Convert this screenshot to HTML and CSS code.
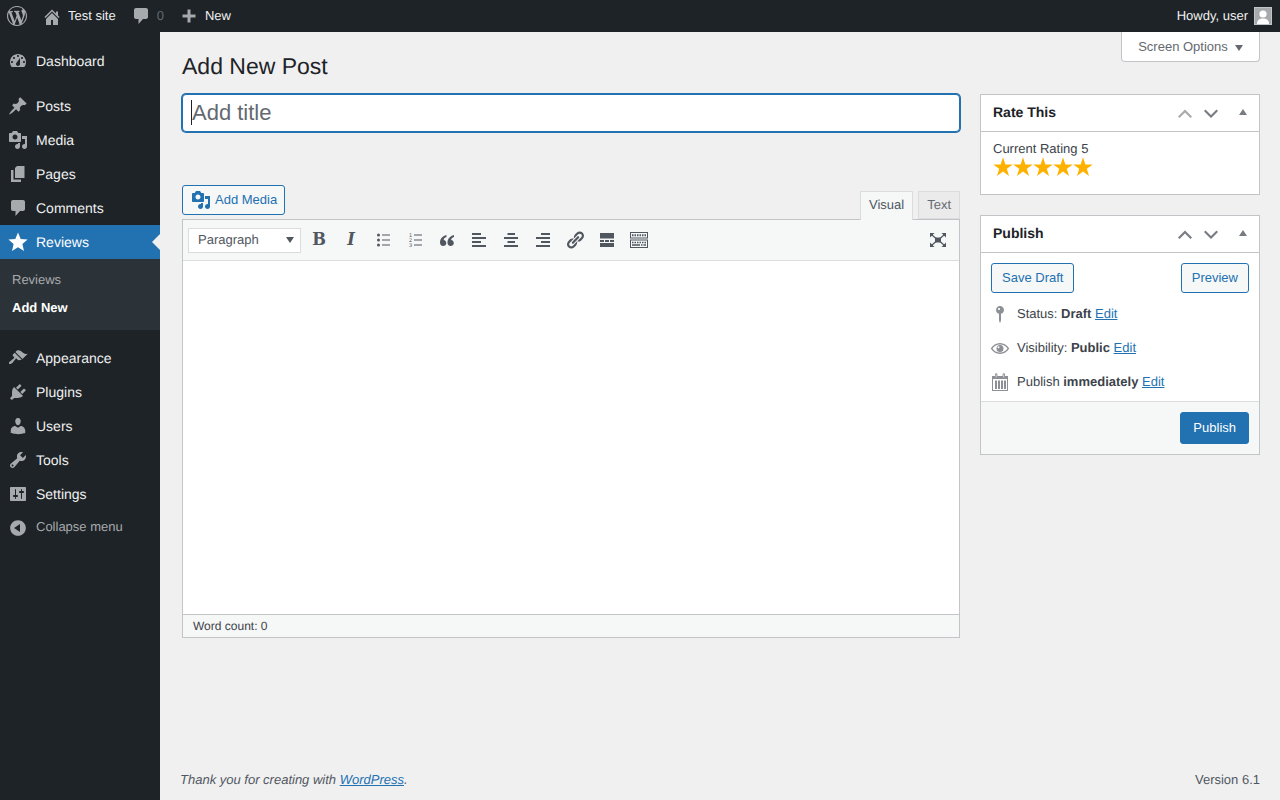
FILE: index.html
```html
<!DOCTYPE html>
<html lang="en">
<head>
    <meta charset="UTF-8">
    <meta name="viewport" content="width=device-width, initial-scale=1.0">
    <title>Add New Post</title>
    <link rel="stylesheet" href="styles.css">
</head>
<body>
    <svg class="sprite" aria-hidden="true">
        <symbol id="i-media" viewBox="0 0 20 20"><path d="M13 11V4c0-.55-.45-1-1-1h-1.67L9 1H5L3.67 3H2c-.55 0-1 .45-1 1v7c0 .55.45 1 1 1h10c.55 0 1-.45 1-1zM7 4.500c1.380 0 2.500 1.120 2.500 2.500S8.380 9.500 7 9.500 4.500 8.380 4.500 7 5.620 4.500 7 4.500zM14 6h5v10.500c0 1.380-1.120 2.500-2.500 2.500S14 17.880 14 16.500s1.120-2.500 2.500-2.500c.17 0 .34.02.5.05V9h-3V6zm-4 8.050V13h2v3.500c0 1.380-1.120 2.500-2.500 2.500S7 17.880 7 16.500 8.120 14 9.500 14c.17 0 .34.02.5.05z"/></symbol>
        <symbol id="i-comment" viewBox="0 0 20 20"><path d="M5 2h10c1.100 0 2 .9 2 2v7c0 1.100-.9 2-2 2h-3l-4.500 5v-5H5c-1.100 0-2-.9-2-2V4c0-1.100.9-2 2-2z"/></symbol>
        <symbol id="i-star" viewBox="0 0 20 20"><path d="M10 .5l2.700 6.400 6.900.6-5.200 4.600 1.600 6.800L10 15.300l-6 3.600 1.600-6.800L.4 7.500l6.900-.6z"/></symbol>
        <symbol id="i-rating" viewBox="0 0 20 20"><path d="M10 .3l2.350 7.100h7.450l-6 4.450 2.250 7.150L10 14.600 3.950 19l2.250-7.150-6-4.450h7.450z"/></symbol>
        <symbol id="i-up" viewBox="0 0 20 20"><path d="M3 13.500L10 6.500l7 7-1.500 1.500L10 9.500 4.500 15z"/></symbol>
        <symbol id="i-down" viewBox="0 0 20 20"><path d="M3 8L10 15l7-7-1.500-1.500L10 12 4.500 6.500z"/></symbol>
    </svg>

    <header class="adminbar">
        <div class="bar-left">
            <svg class="bar-logo" viewBox="0 0 20 20"><path d="M20 10c0-5.510-4.490-10-10-10C4.480 0 0 4.490 0 10c0 5.520 4.480 10 10 10 5.510 0 10-4.480 10-10zM7.780 15.370L4.370 6.220c.55-.02 1.170-.08 1.170-.08.5-.06.44-1.130-.06-1.110 0 0-1.450.11-2.370.11-.18 0-.37 0-.58-.01C4.120 2.690 6.870 1.110 10 1.110c2.330 0 4.450.87 6.050 2.340-.68-.11-1.650.39-1.650 1.580 0 .74.45 1.360.9 2.100.35.61.55 1.360.55 2.460 0 1.490-1.400 5-1.400 5l-3.030-8.370c.54-.02.82-.17.82-.17.5-.05.44-1.250-.06-1.220 0 0-1.440.12-2.380.12-.87 0-2.330-.12-2.330-.12-.5-.03-.56 1.200-.06 1.220l.92.08 1.260 3.410zM17.410 10c.24-.64.74-1.870.43-4.250.7 1.290 1.050 2.710 1.050 4.250 0 3.290-1.730 6.240-4.400 7.780.97-2.590 1.940-5.200 2.920-7.780zM6.100 18.090C3.120 16.650 1.110 13.530 1.110 10c0-1.300.23-2.480.72-3.590C3.250 10.300 4.670 14.200 6.100 18.090zm4.030-6.630l2.580 6.980c-.86.29-1.760.45-2.710.45-.79 0-1.570-.11-2.290-.33.81-2.380 1.620-4.740 2.420-7.100z"/></svg>
            <a class="bar-item bar-site">
                <svg class="bar-icon" viewBox="0 0 20 20"><path d="M16 8.500l1.530 1.530-1.060 1.060L10 4.620l-6.470 6.470-1.060-1.060L10 2.500l4 4v-2h2v4zm-6-2.460l6 5.990V18h-5v-5H9v5H4v-5.970z"/></svg>
                <span>Test site</span>
            </a>
            <a class="bar-item bar-comments">
                <svg class="bar-icon"><use href="#i-comment"/></svg>
                <span class="bar-count">0</span>
            </a>
            <a class="bar-item bar-new">
                <svg class="bar-icon" viewBox="0 0 20 20"><path d="M8.500 3.500h3v5h5v3h-5v5h-3v-5h-5v-3h5z"/></svg>
                <span>New</span>
            </a>
        </div>
        <div class="bar-right">
            <span>Howdy, user</span>
            <svg class="avatar" viewBox="0 0 18 18"><rect width="18" height="18" fill="#c3c4c7"/><rect x="1" y="1" width="16" height="16" fill="#a7aaad"/><circle cx="9" cy="7" r="3.600" fill="#fff"/><path d="M3 17c0-4 2.500-5.500 6-5.500s6 1.500 6 5.500z" fill="#fff"/></svg>
        </div>
    </header>

    <div class="layout">
        <nav class="sidemenu">
            <a class="menu-item">
                <svg viewBox="0 0 20 20"><path d="M3.760 16h12.480c1.100-1.370 1.760-3.110 1.760-5 0-4.420-3.580-8-8-8s-8 3.580-8 8c0 1.890.66 3.630 1.760 5zM10 4c.55 0 1 .45 1 1s-.45 1-1 1-1-.45-1-1 .45-1 1-1zM6 6c.55 0 1 .45 1 1s-.45 1-1 1-1-.45-1-1 .45-1 1-1zm8 0c.55 0 1 .45 1 1s-.45 1-1 1-1-.45-1-1 .45-1 1-1zm-5.370 5.550L12 7v6c0 1.100-.9 2-2 2s-2-.9-2-2c0-.57.24-1.080.63-1.450zM4 10c.55 0 1 .45 1 1s-.45 1-1 1-1-.45-1-1 .45-1 1-1zm12 0c.55 0 1 .45 1 1s-.45 1-1 1-1-.45-1-1 .45-1 1-1z" fill-rule="evenodd"/></svg>
                Dashboard
            </a>
            <div class="menu-sep"></div>
            <a class="menu-item">
                <svg viewBox="0 0 20 20"><path d="M10.440 3.020l1.820-1.820 6.360 6.350-1.830 1.820c-1.050-.68-2.480-.57-3.410.36l-.75.75c-.92.93-1.040 2.350-.35 3.410l-1.830 1.820-2.410-2.410-2.800 2.790c-.42.42-3.380 2.710-3.800 2.290s1.860-3.390 2.280-3.810l2.790-2.790L4.100 9.360l1.830-1.820c1.050.69 2.480.57 3.400-.36l.75-.75c.93-.92 1.050-2.350.36-3.410z"/></svg>
                Posts
            </a>
            <a class="menu-item"><svg><use href="#i-media"/></svg>Media</a>
            <a class="menu-item">
                <svg viewBox="0 0 20 20"><path d="M9 2h7.500v12H7V4zM3 6h2.500v9.500H13V18H3z"/></svg>
                Pages
            </a>
            <a class="menu-item"><svg><use href="#i-comment"/></svg>Comments</a>
            <a class="menu-item menu-current"><svg><use href="#i-star"/></svg>Reviews</a>
            <div class="submenu">
                <a class="submenu-item">Reviews</a>
                <a class="submenu-item submenu-current">Add New</a>
            </div>
            <div class="menu-sep"></div>
            <a class="menu-item">
                <svg viewBox="0 0 20 20"><path d="M14.480 11.060L7.410 3.990l1.500-1.500c.5-.56 2.300-.47 3.510.32 1.210.8 1.430 1.280 2.910 2.100 1.180.64 2.450 1.260 4.450.85zm-.71.71L6.700 4.700 4.930 6.470c-.39.39-.39 1.020 0 1.410l1.060 1.060c.39.39.39 1.030 0 1.420-.6.6-1.430 1.110-2.210 1.690-.35.26-.7.53-1.010.84C1.430 13.230.4 14.910 1.200 15.700c.79.8 2.470-.23 3.820-1.570.31-.31.58-.66.85-1.020.57-.78 1.080-1.610 1.690-2.210.39-.39 1.020-.39 1.410 0l1.060 1.060c.39.39 1.020.39 1.410 0z"/></svg>
                Appearance
            </a>
            <a class="menu-item">
                <svg viewBox="0 0 20 20"><path d="M13.110 4.360L9.870 7.600 8 5.730l3.240-3.240c.35-.34 1.050-.2 1.560.32.52.51.66 1.210.31 1.550zm-8 1.770l.91-1.120 9.010 9.010-1.190.84c-.71.71-2.630 1.160-3.820 1.160H6.140L4.900 17.260c-.59.59-1.540.59-2.120 0-.59-.58-.59-1.530 0-2.120l1.240-1.240v-3.880c0-1.130.4-3.190 1.090-3.890zm7.260 3.970l3.240-3.240c.34-.35 1.040-.21 1.550.31.52.51.66 1.210.31 1.550l-3.240 3.250z"/></svg>
                Plugins
            </a>
            <a class="menu-item">
                <svg viewBox="0 0 20 20"><path d="M10 9.250c-2.270 0-2.730-3.440-2.730-3.440C7 4.020 7.820 2 9.970 2c2.160 0 2.980 2.020 2.710 3.810 0 0-.41 3.440-2.680 3.440zm0 2.570L12.720 10c2.390 0 4.520 2.330 4.520 4.530v2.490s-3.650 1.130-7.240 1.130c-3.650 0-7.240-1.130-7.240-1.130v-2.490c0-2.250 1.940-4.480 4.470-4.480z"/></svg>
                Users
            </a>
            <a class="menu-item">
                <svg viewBox="0 0 20 20"><path d="M16.680 9.770c-1.340 1.340-3.300 1.670-4.950.99l-5.410 6.520c-.99.99-2.590.99-3.580 0s-.99-2.590 0-3.570l6.520-5.420c-.68-1.650-.35-3.610.99-4.950 1.280-1.280 3.120-1.620 4.720-1.060l-2.890 2.890 2.820 2.820 2.860-2.870c.53 1.580.18 3.390-1.080 4.650zM3.810 16.210c.4.39 1.040.39 1.430 0 .4-.4.4-1.040 0-1.430-.39-.4-1.030-.4-1.430 0-.39.39-.39 1.030 0 1.430z"/></svg>
                Tools
            </a>
            <a class="menu-item">
                <svg viewBox="0 0 20 20"><path d="M18 16V4c0-.55-.45-1-1-1H3c-.55 0-1 .45-1 1v12c0 .55.45 1 1 1h14c.55 0 1-.45 1-1zM8 11h1c.55 0 1 .45 1 1s-.45 1-1 1H8v1.500c0 .28-.22.5-.5.5s-.5-.22-.5-.5V13H6c-.55 0-1-.45-1-1s.45-1 1-1h1V5.500c0-.28.22-.5.5-.5s.5.22.5.5V11zm5-2h-1c-.55 0-1-.45-1-1s.45-1 1-1h1V5.500c0-.28.22-.5.5-.5s.5.22.5.5V7h1c.55 0 1 .45 1 1s-.45 1-1 1h-1v5.500c0 .28-.22.5-.5.5s-.5-.22-.5-.5V9z"/></svg>
                Settings
            </a>
            <a class="menu-item menu-collapse">
                <svg viewBox="0 0 20 20"><path d="M10 2.160c4.330 0 7.840 3.510 7.840 7.840s-3.510 7.840-7.840 7.840S2.160 14.330 2.160 10 5.710 2.160 10 2.160zm2 11.840V6l-6 4z"/></svg>
                Collapse menu
            </a>
        </nav>

        <main class="content">
            <button class="screen-options">Screen Options<i class="caret"></i></button>
            <div class="wrap">
                <h1>Add New Post</h1>
                <div class="columns">
                    <div class="post-column">
                        <div class="title-wrap">
                            <input class="title-input" type="text" placeholder="Add title">
                            <span class="title-caret"></span>
                        </div>

                        <div class="editor-tools">
                            <button class="btn btn-media"><svg><use href="#i-media"/></svg>Add Media</button>
                            <div class="editor-tabs">
                                <span class="tab tab-active">Visual</span>
                                <span class="tab">Text</span>
                            </div>
                        </div>

                        <div class="editor">
                            <div class="toolbar">
                                <div class="format-select">Paragraph<i class="caret"></i></div>
                                <span class="tool tool-b">B</span>
                                <span class="tool tool-i">I</span>
                                <span class="tool"><svg viewBox="0 0 20 20"><circle cx="5.500" cy="5" r="1.500"/><circle cx="5.500" cy="10" r="1.500"/><circle cx="5.500" cy="15" r="1.500"/><path d="M9 4.500h8v1H9zM9 9.500h8v1H9zM9 14.500h8v1H9z"/></svg></span>
                                <span class="tool"><svg viewBox="0 0 20 20"><text x="4" y="7" class="ol-num">1</text><text x="4" y="12" class="ol-num">2</text><text x="4" y="17" class="ol-num">3</text><path d="M9 4.500h8v1H9zM9 9.500h8v1H9zM9 14.500h8v1H9z"/></svg></span>
                                <span class="tool"><svg viewBox="0 0 20 20"><path d="M9.500 5C5.500 6 3 9 3 12.500 3 14.800 4.300 16 6 16c1.900 0 3.300-1.300 3.300-3.100 0-1.600-1.100-2.800-2.700-3C6.800 8.500 8 7.500 9.500 7zM17 5c-4 1-6.500 4-6.500 7.500 0 2.300 1.300 3.500 3 3.500 1.900 0 3.300-1.300 3.300-3.100 0-1.600-1.100-2.800-2.700-3 .2-1.400 1.400-2.400 2.900-2.900z"/></svg></span>
                                <span class="tool"><svg viewBox="0 0 20 20"><path d="M3 3h9v2H3zM3 7h14v2H3zM3 11h9v2H3zM3 15h14v2H3z"/></svg></span>
                                <span class="tool"><svg viewBox="0 0 20 20"><path d="M6.500 3h7.500v2H6.500zM3 7h14v2H3zM6.500 11h7.500v2H6.500zM3 15h14v2H3z"/></svg></span>
                                <span class="tool"><svg viewBox="0 0 20 20"><path d="M8 3h9v2H8zM3 7h14v2H3zM8 11h9v2H8zM3 15h14v2H3z"/></svg></span>
                                <span class="tool"><svg viewBox="0 0 20 20"><path d="M17.740 2.760c1.680 1.690 1.680 4.410 0 6.100l-1.530 1.520c-1.120 1.120-2.700 1.470-4.140 1.090l2.620-2.610.76-.77.76-.76c.84-.84.84-2.200 0-3.040-.84-.85-2.200-.85-3.040 0l-.77.76-3.380 3.380c-.37-1.440-.02-3.020 1.100-4.140l1.520-1.530c1.690-1.680 4.420-1.680 6.100 0zM8.590 13.430l5.340-5.340c.42-.42.42-1.100 0-1.520-.44-.43-1.130-.39-1.530 0l-5.330 5.340c-.42.42-.42 1.100 0 1.520.44.43 1.130.39 1.520 0zm-.76 2.290l4.140-4.150c.38 1.440.03 3.020-1.090 4.140l-1.520 1.530c-1.690 1.680-4.410 1.680-6.100 0-1.680-1.680-1.680-4.420 0-6.100l1.530-1.520c1.120-1.120 2.700-1.470 4.140-1.100l-4.140 4.150c-.85.84-.85 2.200 0 3.050.84.84 2.200.84 3.040 0z"/></svg></span>
                                <span class="tool"><svg viewBox="0 0 20 20"><path d="M3 3h14v5.500H3zM3 10h4v2H3zM8 10h4v2H8zM13 10h4v2h-4zM3 13h14v4H3z"/></svg></span>
                                <span class="tool"><svg class="tool-wide" viewBox="0 0 18 16"><path fill-rule="evenodd" d="M0 0h18v6.500H0zM1 1v4.500h16V1zM0 7.500h18V16H0zM1 8.500V15h16V8.500z"/><path d="M2 2.300h1.500v2H2zM4.500 2.300H6v2H4.500zM7 2.300h1.500v2H7zM9.500 2.300H11v2H9.500zM12 2.300h1.500v2H12zM14.500 2.300H16v2h-1.500zM2 9.800h1.500v1.500H2zM4.500 9.800H6v1.500H4.500zM7 9.800h1.500v1.500H7zM9.500 9.800H11v1.500H9.500zM12 9.800h1.500v1.500H12zM14.500 9.800H16v1.500h-1.500zM2 12.300h8v1.500H2zM11 12.300h1.500v1.500H11zM13.500 12.300H16v1.500h-2.500z"/></svg></span>
                                <span class="tool tool-end"><svg viewBox="0 0 20 20"><path d="M7 7.500h6v5H7zM2 3h4.500L2 7.500zM18 3v4.500L13.500 3zM2 17v-4.500L6.500 17zM18 17h-4.500l4.500-4.500z"/><path class="tool-line" d="M3.500 4.500L8 8.500M16.500 4.500L12 8.500M3.500 15.500L8 11.500M16.500 15.500L12 11.500"/></svg></span>
                            </div>
                            <div class="editor-body"></div>
                            <div class="editor-status">Word count: 0</div>
                        </div>
                    </div>

                    <aside class="side-column">
                        <section class="postbox">
                            <div class="postbox-head">
                                <h2>Rate This</h2>
                                <svg class="head-icon head-disabled"><use href="#i-up"/></svg>
                                <svg class="head-icon"><use href="#i-down"/></svg>
                                <i class="head-toggle"></i>
                            </div>
                            <div class="rate-body">
                                <div>Current Rating 5</div>
                                <div class="stars">
                                    <svg><use href="#i-rating"/></svg>
                                    <svg><use href="#i-rating"/></svg>
                                    <svg><use href="#i-rating"/></svg>
                                    <svg><use href="#i-rating"/></svg>
                                    <svg><use href="#i-rating"/></svg>
                                </div>
                            </div>
                        </section>

                        <section class="postbox">
                            <div class="postbox-head">
                                <h2>Publish</h2>
                                <svg class="head-icon"><use href="#i-up"/></svg>
                                <svg class="head-icon"><use href="#i-down"/></svg>
                                <i class="head-toggle"></i>
                            </div>
                            <div class="publish-actions">
                                <button class="btn">Save Draft</button>
                                <button class="btn">Preview</button>
                            </div>
                            <div class="publish-row">
                                <svg viewBox="0 0 20 20"><path d="M14 6c0 1.860-1.280 3.410-3 3.860V16c0 1-1 3-1 3s-1-2-1-3V9.860c-1.720-.45-3-2-3-3.860 0-2.210 1.790-4 4-4s4 1.790 4 4zM8 5c0 .55.45 1 1 1s1-.45 1-1-.45-1-1-1-1 .45-1 1z" fill-rule="evenodd"/></svg>
                                <span>Status: <b>Draft</b> <a>Edit</a></span>
                            </div>
                            <div class="publish-row">
                                <svg viewBox="0 0 20 20"><path fill-rule="evenodd" d="M10 5c4 0 7.200 2.200 9.200 5.500-2 3.300-5.200 5.500-9.200 5.500S2.800 13.800.8 10.500C2.800 7.200 6 5 10 5zM10 6.500c-3.200 0-5.800 1.600-7.500 4 1.700 2.400 4.300 4 7.500 4s5.800-1.600 7.500-4c-1.700-2.400-4.300-4-7.500-4z"/><path fill-rule="evenodd" d="M10 7a3.500 3.500 0 1 1 0 7 3.500 3.500 0 0 1 0-7zM8.500 8.300a1 1 0 1 0 0 2 1 1 0 0 0 0-2z"/></svg>
                                <span>Visibility: <b>Public</b> <a>Edit</a></span>
                            </div>
                            <div class="publish-row">
                                <svg viewBox="0 0 20 20"><path fill-rule="evenodd" d="M2 4h3V2.500a1.200 1.200 0 0 1 2.400 0V4h5.200V2.500a1.200 1.200 0 0 1 2.400 0V4h3v15H2zM3 7v11h14V7zM5.800 2.200v3.300h.6V2.200zM13.500 2.200v3.300h.6V2.200z"/><path d="M5 8.500h2V17H5zM8 8.500h2V17H8zM11 8.500h2V17h-2zM14 8.500h2V17h-2z"/></svg>
                                <span>Publish <b>immediately</b> <a>Edit</a></span>
                            </div>
                            <div class="publish-major">
                                <button class="btn btn-primary">Publish</button>
                            </div>
                        </section>
                    </aside>
                </div>
            </div>

            <footer class="page-footer">
                <em>Thank you for creating with <a>WordPress</a>.</em>
                <span>Version 6.1</span>
            </footer>
        </main>
    </div>
</body>
</html>
```

FILE: styles.css
```css
* {
    margin: 0;
    padding: 0;
    box-sizing: border-box;
}

body {
    font-family: "Liberation Sans", Arial, sans-serif;
    font-size: 13px;
    line-height: 1.4;
    color: #3c434a;
    background: #f0f0f1;
    min-height: 100vh;
    overflow: hidden;
    text-rendering: geometricPrecision;
}

a {
    color: #2271b1;
}

.sprite {
    display: none;
}

.caret {
    display: inline-block;
    width: 0;
    height: 0;
    border-left: 4.500px solid transparent;
    border-right: 4.500px solid transparent;
    border-top: 6px solid #50575e;
}

/* admin bar */
.adminbar {
    height: 32px;
    background: #1d2327;
    color: #f0f0f1;
    display: flex;
    justify-content: space-between;
    align-items: center;
    padding: 0 8px 0 7px;
}

.bar-left,
.bar-right,
.bar-item {
    display: flex;
    align-items: center;
}

.bar-logo {
    width: 20px;
    height: 20px;
    fill: #a7aaad;
}

.bar-icon {
    width: 20px;
    height: 20px;
    fill: #a7aaad;
    margin-right: 6px;
}

.bar-site {
    margin-left: 15px;
    color: #f0f0f1;
}

.bar-site .bar-icon {
    margin-top: 2px;
}

.bar-comments {
    margin-left: 15px;
}

.bar-count {
    color: #646970;
}

.bar-new {
    margin-left: 15px;
    color: #f0f0f1;
}

.bar-new .bar-icon {
    margin-right: 6px;
}

.avatar {
    width: 18px;
    height: 18px;
    margin-left: 6px;
}

/* side menu */
.layout {
    display: flex;
    height: 768px;
}

.sidemenu {
    width: 160px;
    flex: none;
    background: #1d2327;
    padding-top: 12px;
    font-size: 14px;
}

.menu-item {
    display: flex;
    align-items: center;
    height: 34px;
    padding: 2px 0 0 8px;
    color: #f0f0f1;
    position: relative;
}

.menu-item svg {
    width: 20px;
    height: 20px;
    fill: #a7aaad;
    margin: 0 8px 2px 0;
}

.menu-sep {
    height: 11px;
}

.menu-current {
    background: #2271b1;
    color: #fff;
}

.menu-current svg {
    fill: #fff;
}

.menu-current::after {
    content: "";
    position: absolute;
    right: 0;
    top: 9px;
    border: 8px solid transparent;
    border-right-color: #f0f0f1;
}

.submenu {
    background: #2c3338;
    padding: 7px 0;
    height: 71px;
    font-size: 13px;
}

.submenu-item {
    display: block;
    height: 28px;
    line-height: 28px;
    padding-left: 12px;
    color: #a7aaad;
}

.submenu-current {
    color: #fff;
    font-weight: bold;
}

.menu-collapse {
    font-size: 13px;
    color: #a7aaad;
    height: 32px;
    padding-top: 0;
}

.menu-collapse svg {
    margin: 2px 8px 0 0;
}

/* main area */
.content {
    flex: 1;
    padding: 0 20px;
    display: flex;
    flex-direction: column;
    position: relative;
}

.screen-options {
    position: absolute;
    top: 0;
    right: 20px;
    width: 139px;
    height: 30px;
    padding-top: 2px;
    background: #fff;
    border: 1px solid #c3c4c7;
    border-top: none;
    border-radius: 0 0 4px 4px;
    font: inherit;
    color: #646970;
    display: flex;
    align-items: center;
    justify-content: center;
    gap: 7px;
}

.screen-options .caret {
    border-top-color: #646970;
}

.wrap {
    margin: 10px 0 0 2px;
}

h1 {
    font-size: 23px;
    font-weight: 400;
    line-height: 30px;
    padding: 9px 0 4px;
    color: #1d2327;
    height: 52px;
}

.columns {
    display: grid;
    grid-template-columns: 778px 280px;
    gap: 20px;
}

.title-wrap {
    position: relative;
}

.title-input {
    display: block;
    width: 100%;
    height: 38px;
    padding: 3px 9px;
    font: 22px "Liberation Sans", Arial, sans-serif;
    border: 1px solid #2271b1;
    box-shadow: 0 0 0 1px #2271b1;
    border-radius: 4px;
    background: #fff;
    outline: none;
}

.title-input::placeholder {
    color: #646970;
    opacity: 1;
}

.title-caret {
    position: absolute;
    left: 9px;
    top: 6px;
    width: 1px;
    height: 25px;
    background: #1d2327;
}

.editor-tools {
    display: flex;
    justify-content: space-between;
    align-items: flex-end;
    margin-top: 53px;
    height: 34px;
    padding-bottom: 4px;
}

.btn {
    height: 30px;
    padding: 0 10px;
    font: inherit;
    color: #2271b1;
    background: #f6f7f7;
    border: 1px solid #2271b1;
    border-radius: 3px;
}

.btn-media {
    display: flex;
    align-items: center;
    gap: 4px;
    padding: 0 7px 0 8px;
    align-self: flex-start;
}

.btn-media svg {
    width: 20px;
    height: 20px;
    fill: #2271b1;
}

.editor-tabs {
    display: flex;
    gap: 5px;
    align-items: flex-start;
    height: 29px;
    margin-bottom: -5px;
    position: relative;
    z-index: 1;
}

.tab {
    height: 28px;
    line-height: 26px;
    padding: 0 8px;
    background: #ebebeb;
    border: 1px solid #dcdcde;
    color: #646970;
}

.tab-active {
    height: 29px;
    background: #f6f7f7;
    border-color: #dcdcde;
    border-bottom: none;
    color: #50575e;
}

.editor {
    border: 1px solid #c3c4c7;
    background: #fff;
}

.toolbar {
    height: 41px;
    background: #f6f7f7;
    border-bottom: 1px solid #dcdcde;
    display: flex;
    align-items: center;
    padding: 0 5px;
    gap: 0;
}

.format-select {
    width: 113px;
    height: 25px;
    margin-right: 2px;
    padding: 0 6px 0 9px;
    background: #fff;
    border: 1px solid #dcdcde;
    color: #50575e;
    display: flex;
    align-items: center;
    justify-content: space-between;
}

.tool {
    width: 32px;
    height: 30px;
    display: flex;
    align-items: center;
    justify-content: center;
    color: #50575e;
}

.tool svg {
    width: 20px;
    height: 20px;
    fill: #50575e;
}

.tool svg.tool-wide {
    width: 18px;
    height: 16px;
}

.tool-b,
.tool-i {
    font-family: "DejaVu Serif Condensed", "DejaVu Serif", serif;
    font-size: 18px;
    font-weight: bold;
}

.tool-i {
    font-style: italic;
}

.ol-num {
    font-size: 5.500px;
    fill: #50575e;
}

.tool-line {
    fill: none;
    stroke: #50575e;
    stroke-width: 1.200;
}

.tool-end {
    margin-left: auto;
}

.editor-body {
    height: 353px;
}

.editor-status {
    height: 23px;
    line-height: 22px;
    padding-left: 10px;
    font-size: 12px;
    color: #3c434a;
    background: #f6f7f7;
    border-top: 1px solid #c3c4c7;
}

/* right column */
.postbox {
    background: #fff;
    border: 1px solid #c3c4c7;
    margin-bottom: 20px;
}

.postbox-head {
    height: 37px;
    border-bottom: 1px solid #c3c4c7;
    display: flex;
    align-items: center;
    padding: 0 12.500px 0 12px;
}

.postbox-head h2 {
    font-size: 14px;
    font-weight: bold;
    color: #1d2327;
    margin-right: auto;
}

.head-icon {
    width: 20px;
    height: 20px;
    margin-left: 6px;
    fill: #787c82;
}

.head-disabled {
    fill: #a7aaad;
}

.head-toggle {
    width: 0;
    height: 0;
    margin: -3px 0 0 17.500px;
    border-left: 4.500px solid transparent;
    border-right: 4.500px solid transparent;
    border-bottom: 6px solid #787c82;
}

.rate-body {
    height: 62px;
    padding: 8px 12px 0;
    line-height: 18px;
}

.stars {
    display: flex;
    margin-top: -1px;
    height: 22px;
}

.stars svg {
    width: 20px;
    height: 20px;
    fill: #ffb100;
}

.publish-actions {
    display: flex;
    justify-content: space-between;
    padding: 10px 10px 0;
}

.publish-row {
    display: flex;
    align-items: center;
    height: 34px;
    padding-left: 9px;
}

.publish-actions + .publish-row {
    margin-top: 4px;
}

.publish-row svg {
    width: 20px;
    height: 20px;
    fill: #8c8f94;
    margin-right: 7px;
    flex: none;
}

.publish-row a {
    text-decoration: underline;
}

.publish-major {
    margin-top: 2px;
    padding: 10px;
    background: #f6f7f7;
    border-top: 1px solid #dcdcde;
    display: flex;
    justify-content: flex-end;
}

.btn-primary {
    height: 32px;
    padding: 0 12px;
    background: #2271b1;
    color: #fff;
}

.page-footer {
    margin-top: auto;
    display: flex;
    justify-content: space-between;
    padding-bottom: 11px;
    color: #50575e;
}

.page-footer a {
    text-decoration: underline;
}
```
